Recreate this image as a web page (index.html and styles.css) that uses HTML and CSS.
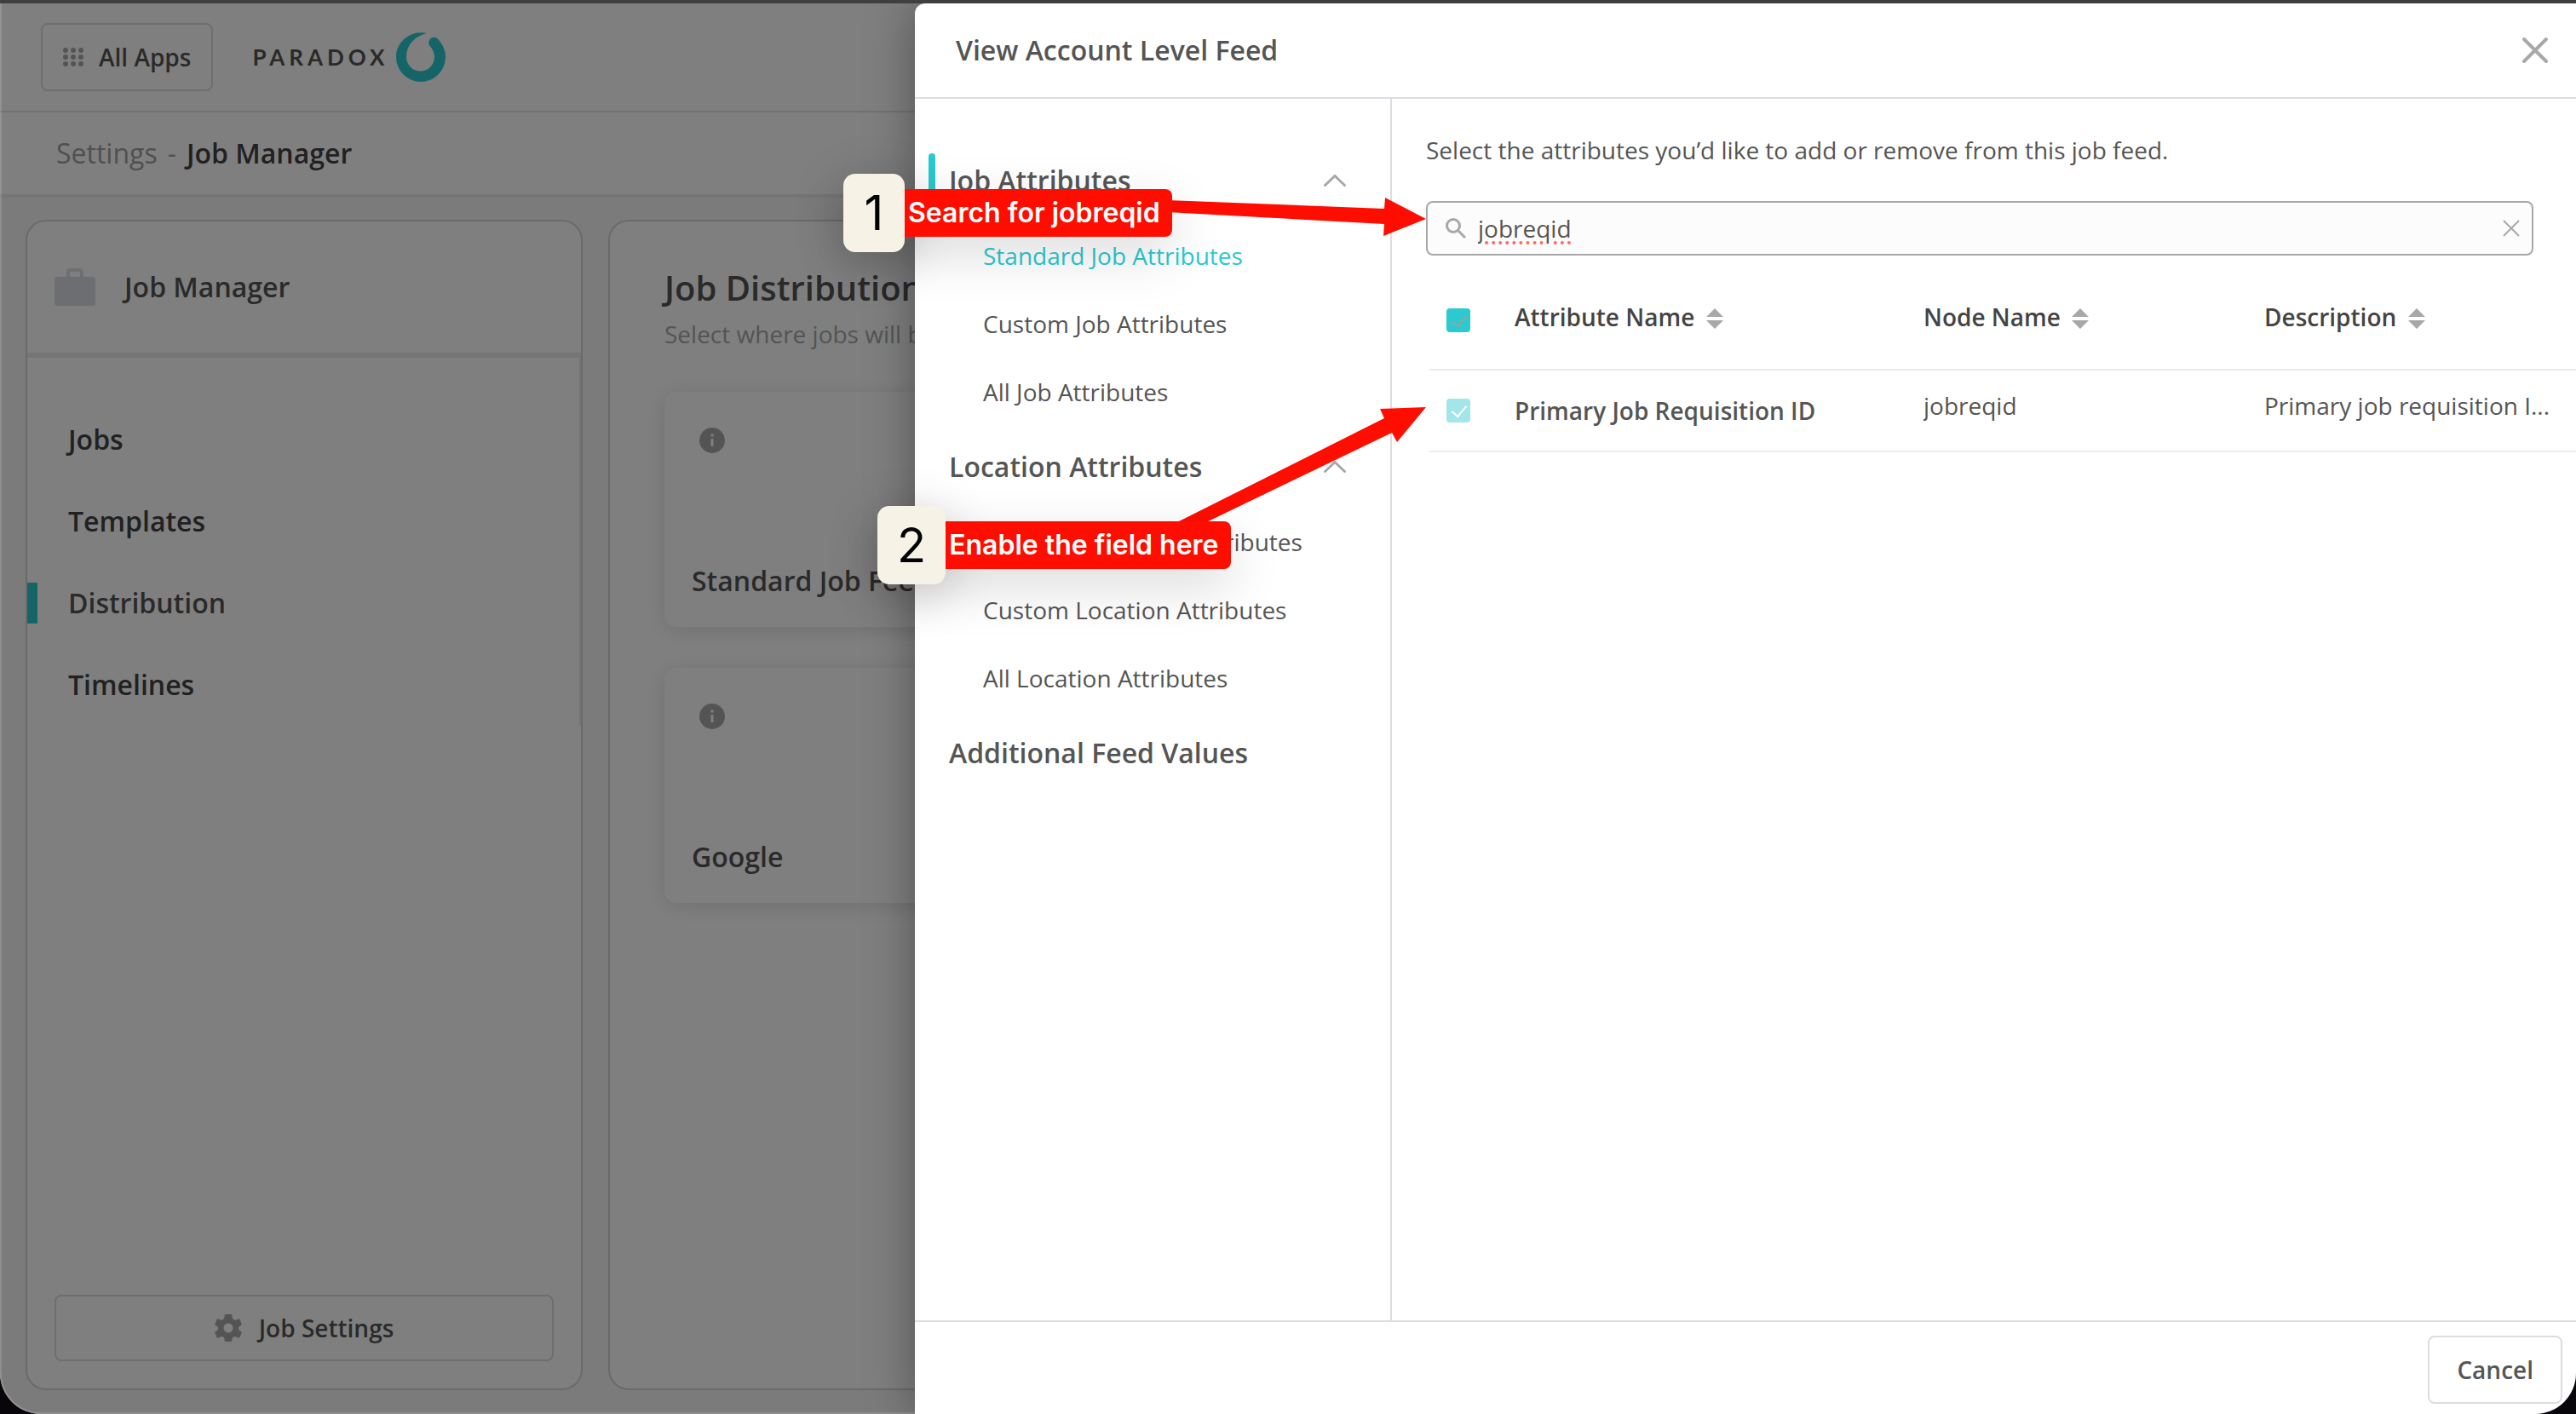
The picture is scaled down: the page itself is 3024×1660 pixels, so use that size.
FILE: index.html
```html
<!DOCTYPE html>
<html lang="en">
<head>
  <meta charset="UTF-8" />
  <meta name="viewport" content="width=device-width, initial-scale=1.0"/>
  <title>Job Manager - Distribution</title>
  <link rel="stylesheet" href="styles.css">
</head>
<body>
  <div class="window">
    <header class="topbar">
      <button class="btn apps-btn" type="button">
        <svg class="dots" viewBox="0 0 24 24" fill="#a9a9a9" aria-hidden="true">
          <circle cx="3" cy="4" r="3"/><circle cx="12" cy="4" r="3"/><circle cx="21" cy="4" r="3"/>
          <circle cx="3" cy="12" r="3"/><circle cx="12" cy="12" r="3"/><circle cx="21" cy="12" r="3"/>
          <circle cx="3" cy="20" r="3"/><circle cx="12" cy="20" r="3"/><circle cx="21" cy="20" r="3"/>
        </svg>
        All Apps
      </button>
      <div class="brand">
        <span class="brand-name">PARADOX</span>
        <svg class="brand-mark" viewBox="0 0 58 58" aria-hidden="true">
          <path fill="#2bc9d0" d="M36 1C17-3 0 11 0 29a29 29 0 0 0 58 0c0-8-3-14-8-20a6 6 0 0 0-11 6c4 5 6 9 6 14a16.500 16.500 0 0 1-33 0C12 15 21 5 36 1z"/>
        </svg>
      </div>
    </header>

    <nav class="breadcrumb"><a href="#">Settings</a><span>-</span><strong>Job Manager</strong></nav>

    <div class="workspace">
      <aside class="sidebar">
        <div class="sidebar-head">
          <svg class="briefcase" viewBox="0 0 48 44" aria-hidden="true">
            <path d="M16 10V5q0-3 3-3h10q3 0 3 3v5" fill="none" stroke="#dedfe3" stroke-width="4"/>
            <rect y="10" width="48" height="34" rx="3" fill="#dbdde3"/>
          </svg>
          <span>Job Manager</span>
        </div>
        <ul class="menu">
          <li><a href="#">Jobs</a></li>
          <li><a href="#">Templates</a></li>
          <li class="active"><a href="#">Distribution</a></li>
          <li><a href="#">Timelines</a></li>
        </ul>
        <button class="btn settings-btn" type="button">
          <svg class="gear" viewBox="0 0 32 32" aria-hidden="true">
            <path fill="#a9a9a9" fill-rule="evenodd" d="M12 0h8l1 5 3 2 5-2 3 7-4 3v3l4 3-3 7-5-2-3 1-1 5h-8l-1-5-3-1-5 2-3-7 4-3v-3l-4-3 3-7 5 2 3-2zM16 10.500a5.500 5.500 0 1 0 0 11 5.500 5.500 0 0 0 0-11z"/>
          </svg>
          Job Settings
        </button>
      </aside>

      <main class="content">
        <h1>Job Distribution</h1>
        <p class="subtitle">Select where jobs will be</p>
        <div class="feed-card">
          <svg class="info" viewBox="0 0 30 30" aria-hidden="true"><circle cx="15" cy="15" r="15" fill="#a9a9a9"/><path d="M13.500 7.500h3v3h-3zM13.500 13h3v9h-3z" fill="#fff"/></svg>
          <h2>Standard Job Feed</h2>
        </div>
        <div class="feed-card">
          <svg class="info" viewBox="0 0 30 30" aria-hidden="true"><circle cx="15" cy="15" r="15" fill="#a9a9a9"/><path d="M13.500 7.500h3v3h-3zM13.500 13h3v9h-3z" fill="#fff"/></svg>
          <h2>Google</h2>
        </div>
      </main>
    </div>

    <div class="backdrop"></div>

    <section class="drawer" role="dialog" aria-labelledby="drawer-title">
      <header class="drawer-head">
        <h2 id="drawer-title">View Account Level Feed</h2>
        <button class="icon-btn" type="button" aria-label="Close">
          <svg class="close" viewBox="0 0 32 32" aria-hidden="true"><path d="M3 3l26 26M29 3L3 29" stroke="#a8a8a8" stroke-width="4" stroke-linecap="round"/></svg>
        </button>
      </header>

      <div class="drawer-body">
        <nav class="attr-nav">
          <h3 class="current">Job Attributes
            <svg class="chevron" viewBox="0 0 26 14" aria-hidden="true"><path d="M1.500 12.500L13 1.500l11.500 11" fill="none" stroke="#a8a8a8" stroke-width="3" stroke-linecap="round"/></svg>
          </h3>
          <ul>
            <li class="active"><a href="#">Standard Job Attributes</a></li>
            <li><a href="#">Custom Job Attributes</a></li>
            <li><a href="#">All Job Attributes</a></li>
          </ul>
          <h3>Location Attributes
            <svg class="chevron" viewBox="0 0 26 14" aria-hidden="true"><path d="M1.500 12.500L13 1.500l11.500 11" fill="none" stroke="#a8a8a8" stroke-width="3" stroke-linecap="round"/></svg>
          </h3>
          <ul>
            <li><a href="#">Standard Location Attributes</a></li>
            <li><a href="#">Custom Location Attributes</a></li>
            <li><a href="#">All Location Attributes</a></li>
          </ul>
          <h3>Additional Feed Values</h3>
        </nav>

        <div class="attr-panel">
          <label class="hint" for="attr-search">Select the attributes you’d like to add or remove from this job feed.</label>
          <div class="search">
            <svg class="magnifier" viewBox="0 0 24 24" aria-hidden="true"><circle cx="9" cy="9" r="7.500" fill="none" stroke="#a8a8a8" stroke-width="3"/><path d="M14.500 14.500L23 23" stroke="#a8a8a8" stroke-width="3"/></svg>
            <input id="attr-search" type="text" value="jobreqid" spellcheck="false">
            <button class="icon-btn" type="button" aria-label="Clear search">
              <svg class="clear" viewBox="0 0 20 20" aria-hidden="true"><path d="M1 1l18 18M19 1L1 19" stroke="#a8a8a8" stroke-width="2"/></svg>
            </button>
          </div>

          <table class="attr-table">
            <thead>
              <tr>
                <th class="col-check"><input type="checkbox" class="check partial" aria-label="Select all attributes" checked></th>
                <th class="col-name">Attribute Name <svg class="sort" viewBox="0 0 20 24" aria-hidden="true"><path d="M10 0l10 10H0zM0 14h20L10 24z" fill="#a8a8a8"/></svg></th>
                <th class="col-node">Node Name <svg class="sort" viewBox="0 0 20 24" aria-hidden="true"><path d="M10 0l10 10H0zM0 14h20L10 24z" fill="#a8a8a8"/></svg></th>
                <th>Description <svg class="sort" viewBox="0 0 20 24" aria-hidden="true"><path d="M10 0l10 10H0zM0 14h20L10 24z" fill="#a8a8a8"/></svg></th>
              </tr>
            </thead>
            <tbody>
              <tr>
                <td class="col-check"><input type="checkbox" id="attr-jobreqid" class="check faded" checked></td>
                <td class="col-name"><label for="attr-jobreqid">Primary Job Requisition ID</label></td>
                <td>jobreqid</td>
                <td>Primary job requisition I...</td>
              </tr>
            </tbody>
          </table>
        </div>
      </div>

      <footer class="drawer-foot">
        <button class="btn cancel-btn" type="button">Cancel</button>
      </footer>
    </section>

    <!-- callouts and arrows -->
    <svg class="arrows" viewBox="0 0 3024 1660" aria-hidden="true">
      <path fill="#ff0d00" d="M1370 235L1625 245 1626 232 1674 257 1624 277 1625 263 1370 249zM1378 615L1625 491 1620 480 1674 478 1640 519 1634 508 1408 617z"/>
    </svg>
    <div class="callout callout-one"><span class="step">1</span><span class="note">Search for jobreqid</span></div>
    <div class="callout callout-two"><span class="step">2</span><span class="note">Enable the field here</span></div>
  </div>
</body>
</html>
```

FILE: styles.css
```css
* {
  box-sizing: border-box;
}
body {
  margin: 0;
  background: #08060a;
  font-family: "Open Sans", "Liberation Sans", sans-serif;
  font-size: 28px;
  line-height: 40px;
  color: #555;
}
h1, h2, h3, p, ul {
  margin: 0;
  padding: 0;
}
h1, h2, h3 {
  font-weight: 600;
}
ul {
  list-style: none;
}
a {
  color: inherit;
  text-decoration: none;
}
svg {
  display: block;
  flex: none;
}
.window {
  position: relative;
  display: flex;
  flex-direction: column;
  min-height: 100vh;
  border-top: 4px solid #3f3f3f;
  border-radius: 0 0 48px 48px;
  overflow: hidden;
  background: #f6f6f6;
}
.btn {
  display: flex;
  align-items: center;
  justify-content: center;
  height: 80px;
  background: #fff;
  border: 2px solid #dcdce2;
  border-radius: 8px;
  color: #555;
  font: inherit;
  font-weight: 600;
}
.icon-btn {
  padding: 0;
  border: none;
  background: none;
}

/* page behind the drawer */
.topbar {
  display: flex;
  align-items: center;
  gap: 46px;
  height: 128px;
  padding: 0 48px;
  background: #fff;
  border-bottom: 2px solid #e2e2e2;
}
.apps-btn {
  gap: 18px;
  padding: 0 24px;
}
.dots {
  width: 24px;
  height: 24px;
}
.brand {
  display: flex;
  align-items: center;
  gap: 8px;
}
.brand-name {
  font-family: Lato, sans-serif;
  font-size: 26px;
  font-weight: 700;
  letter-spacing: 5px;
}
.brand-mark {
  width: 58px;
  height: 58px;
}
.breadcrumb {
  display: flex;
  gap: 12px;
  height: 100px;
  padding: 28px 66px;
  background: #fff;
  border-bottom: 4px solid #ebebeb;
  font-size: 32px;
  color: #a0a0a0;
}
.breadcrumb strong {
  font-weight: 600;
  color: #434343;
}
.workspace {
  flex: 1;
  display: flex;
  gap: 30px;
  padding: 26px 30px 28px;
}
.sidebar, .content {
  background: #fff;
  border: 2px solid #d4d4d6;
  border-radius: 24px;
}
.sidebar {
  display: flex;
  flex-direction: column;
  flex: none;
  width: 654px;
}
.sidebar-head {
  display: flex;
  align-items: center;
  gap: 34px;
  height: 160px;
  padding: 0 32px;
  border-bottom: 6px solid #ebebeb;
  font-size: 32px;
  font-weight: 600;
}
.briefcase {
  width: 48px;
  height: 44px;
}
.menu {
  height: 432px;
  padding-top: 48px;
  border-right: 2px solid #e8e8e8;
  font-size: 32px;
  font-weight: 600;
  color: #434343;
}
.menu li {
  display: flex;
  align-items: center;
  height: 96px;
  padding-left: 48px;
}
.menu .active {
  padding-left: 0;
  color: #555;
}
.menu .active::before {
  content: "";
  width: 12px;
  height: 48px;
  margin-right: 36px;
  background: #2bc9d0;
}
.settings-btn {
  gap: 20px;
  height: 78px;
  margin: auto 32px 32px;
}
.gear {
  width: 32px;
  height: 32px;
}
.content {
  flex: 1;
  padding: 52px 64px;
}
.content h1 {
  font-size: 40px;
  line-height: 52px;
}
.subtitle {
  margin-bottom: 40px;
  line-height: 56px;
  color: #a8a8a8;
}
.feed-card {
  display: flex;
  flex-direction: column;
  justify-content: space-between;
  height: 276px;
  margin-bottom: 48px;
  padding: 42px 32px 34px;
  border-radius: 14px;
  box-shadow: 0 4px 24px rgba(0, 0, 0, 0.12);
}
.feed-card h2 {
  font-size: 32px;
}
.info {
  width: 30px;
  height: 30px;
  margin-left: 9px;
}
.backdrop {
  position: absolute;
  inset: 0;
  border: 2px solid rgba(255, 255, 255, 0.15);
  border-top: none;
  border-radius: 0 0 48px 48px;
  background: rgba(0, 0, 0, 0.5);
}

/* drawer */
.drawer {
  position: absolute;
  top: 0;
  right: 0;
  bottom: 0;
  display: flex;
  flex-direction: column;
  width: 1950px;
  max-width: 100%;
  background: #fff;
  border-radius: 12px 0 48px 0;
  box-shadow: 0 0 56px rgba(0, 0, 0, 0.35);
}
.drawer-head {
  display: flex;
  align-items: center;
  justify-content: space-between;
  height: 112px;
  padding: 0 32px 0 48px;
  border-bottom: 2px solid #dcdce2;
}
.drawer-head h2 {
  font-size: 32px;
}
.close {
  width: 32px;
  height: 32px;
}
.drawer-body {
  flex: 1;
  display: flex;
}
.attr-nav {
  flex: none;
  width: 560px;
  padding-top: 48px;
  border-right: 2px solid #dcdce2;
}
.attr-nav h3 {
  position: relative;
  display: flex;
  align-items: center;
  justify-content: space-between;
  height: 96px;
  padding: 0 52px 0 40px;
  font-size: 32px;
}
.attr-nav .current::before {
  content: "";
  position: absolute;
  left: 16px;
  top: 16px;
  width: 8px;
  height: 64px;
  border-radius: 4px;
  background: #2bc9d0;
}
.chevron {
  width: 26px;
  height: 14px;
}
.attr-nav li {
  padding: 20px 0 20px 80px;
}
.attr-nav .active {
  color: #2bc9d0;
}
.attr-panel {
  flex: 1;
  min-width: 0;
  padding: 40px 0 0 40px;
}
.hint {
  display: block;
}
.search {
  display: flex;
  align-items: center;
  gap: 14px;
  height: 64px;
  margin: 40px 50px 0 0;
  padding: 0 14px 0 21px;
  background: #fcfcfc;
  border: 2px solid #a8a8a8;
  border-radius: 8px;
}
.search input {
  flex: 1;
  min-width: 0;
  padding: 0;
  border: none;
  outline: none;
  background: none;
  font: inherit;
  color: inherit;
  text-decoration: underline dotted #ff6b60 4px;
  text-underline-offset: 4px;
}
.magnifier {
  width: 24px;
  height: 24px;
}
.clear {
  width: 20px;
  height: 20px;
}
.attr-table {
  width: calc(100% - 4px);
  margin-left: 4px;
  table-layout: fixed;
  border-collapse: collapse;
}
.attr-table th {
  height: 134px;
  padding: 10px 0 0;
  border-bottom: 2px solid #e8ebf1;
  text-align: left;
  font-weight: 600;
  color: #444;
}
.attr-table td {
  height: 96px;
  padding: 0 24px 12px 0;
  border-bottom: 2px solid #ececec;
  overflow: hidden;
  white-space: nowrap;
  text-overflow: ellipsis;
}
.attr-table .col-check {
  width: 100px;
  padding-left: 20px;
  padding-bottom: 0;
}
.attr-table th.col-check {
  padding-top: 18px;
}
.attr-table .col-name {
  width: 480px;
}
.attr-table td.col-name {
  padding-bottom: 0;
  font-weight: 600;
}
.attr-table .col-node {
  width: 400px;
}
.sort {
  display: inline-block;
  width: 20px;
  height: 24px;
  margin-left: 6px;
  vertical-align: -3px;
}
.check {
  appearance: none;
  display: block;
  width: 28px;
  height: 28px;
  margin: 0;
  border-radius: 4px;
  background: #2bc9d0;
  color: #fff;
}
.check::before {
  content: "";
  display: block;
  width: 8px;
  height: 15px;
  margin: 4px 0 0 10px;
  border: solid currentColor;
  border-width: 0 2px 2px 0;
  transform: rotate(40deg);
}
.check.partial {
  color: #a0a0a0;
}
.check.faded {
  background: #a3e6e9;
}
.drawer-foot {
  display: flex;
  justify-content: flex-end;
  height: 110px;
  padding: 16px;
  border-top: 2px solid #dcdce2;
}
.cancel-btn {
  padding: 0 32px;
}

/* callouts */
.arrows {
  position: absolute;
  left: 0;
  top: -4px;
  width: 3024px;
  height: 1660px;
  pointer-events: none;
}
.callout {
  position: absolute;
  display: flex;
  align-items: center;
  font-family: Inter, sans-serif;
}
.callout-one {
  left: 990px;
  top: 200px;
}
.callout-two {
  left: 1030px;
  top: 590px;
}
.step {
  position: relative;
  z-index: 1;
  min-width: 72px;
  padding: 0 23px;
  border-radius: 14px;
  background: #f6f3e6;
  box-shadow: 0 10px 60px rgba(0, 0, 0, 0.2);
  font-size: 56px;
  line-height: 92px;
  text-align: center;
  color: #000;
}
.note {
  position: relative;
  z-index: 1;
  height: 56px;
  padding: 0 14px 0 4px;
  border-radius: 0 8px 8px 0;
  background: #ff0d00;
  font-size: 32px;
  line-height: 56px;
  font-weight: 600;
  color: #fff;
}
.callout::after {
  content: "";
  position: absolute;
  inset: 18px 0;
  border-radius: 8px;
  box-shadow: 0 20px 60px rgba(0, 0, 0, 0.15);
}
```
